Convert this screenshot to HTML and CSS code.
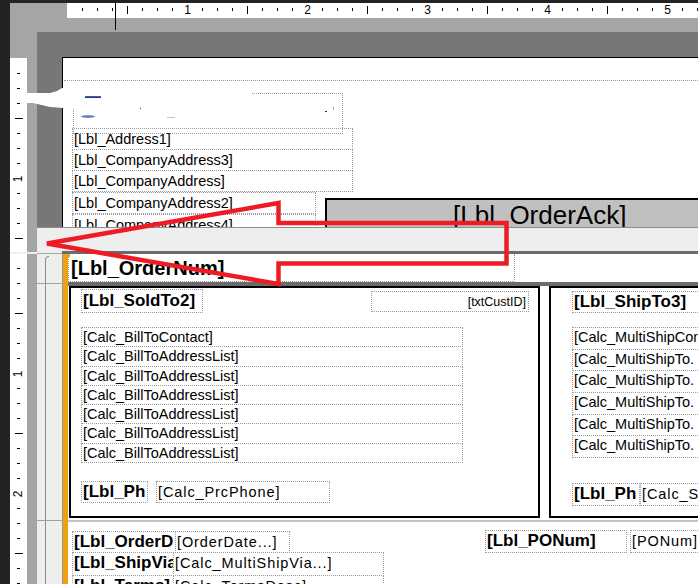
FILE: index.html
```html
<!DOCTYPE html>
<html>
<head>
<meta charset="utf-8">
<link rel="stylesheet" href="styles.css">
</head>
<body>
<div class="app">
  <div class="designer">
    <div class="hruler-row">
      <div class="hr-corner"></div>
      <div class="hruler">
        <div class="hc s"></div><div class="hc s"></div><div class="hc s"></div><div class="hc l"></div><div class="hc s"></div><div class="hc s"></div><div class="hc s"></div><div class="hc n">1</div>
        <div class="hc s"></div><div class="hc s"></div><div class="hc s"></div><div class="hc l"></div><div class="hc s"></div><div class="hc s"></div><div class="hc s"></div><div class="hc n">2</div>
        <div class="hc s"></div><div class="hc s"></div><div class="hc s"></div><div class="hc l"></div><div class="hc s"></div><div class="hc s"></div><div class="hc s"></div><div class="hc n">3</div>
        <div class="hc s"></div><div class="hc s"></div><div class="hc s"></div><div class="hc l"></div><div class="hc s"></div><div class="hc s"></div><div class="hc s"></div><div class="hc n">4</div>
        <div class="hc s"></div><div class="hc s"></div><div class="hc s"></div><div class="hc l"></div><div class="hc s"></div><div class="hc s"></div><div class="hc s"></div><div class="hc n">5</div>
        <div class="hc s"></div><div class="hc s"></div>
      </div>
    </div>
    <div class="gap-band"></div>
    <div class="main">
      <div class="side">
        <div class="side-top"></div>
        <div class="side-seg one">
          <div class="vruler">
            <div class="vc s"></div><div class="vc s"></div><div class="vc s"></div><div class="vc l"></div><div class="vc s"></div><div class="vc s"></div><div class="vc s"></div><div class="vc n"><span>1</span></div>
            <div class="vc s"></div><div class="vc s"></div><div class="vc s"></div><div class="vc l"></div><div class="vc s"></div>
          </div>
        </div>
        <div class="side-sep"></div>
        <div class="side-seg two">
          <div class="vruler">
            <div class="vc s"></div><div class="vc s"></div><div class="vc s"></div><div class="vc l"></div><div class="vc s"></div><div class="vc s"></div><div class="vc s"></div><div class="vc n"><span>1</span></div>
            <div class="vc s"></div><div class="vc s"></div><div class="vc s"></div><div class="vc l"></div><div class="vc s"></div><div class="vc s"></div><div class="vc s"></div><div class="vc n"><span>2</span></div>
            <div class="vc s"></div><div class="vc s"></div><div class="vc s"></div><div class="vc l"></div><div class="vc s"></div><div class="vc s"></div>
          </div>
        </div>
      </div>
      <div class="work">
        <div class="work-top"></div>
        <div class="hdr-row">
          <div class="gutter-dark"></div>
          <div class="page-hdr">
            <div class="dotline"></div>
            <div class="logo-box"></div>
            <div class="logo-cover"></div>
            <div class="bit blue-dash"></div>
            <div class="bit blue-oval"></div>
            <div class="bit gray-dash"></div>
            <div class="bit dot1"></div>
            <div class="bit dot2"></div>
            <div class="bit dot3"></div>
            <div class="fld h-a1">[Lbl_Address1]</div>
            <div class="fld h-ca3">[Lbl_CompanyAddress3]</div>
            <div class="fld h-ca">[Lbl_CompanyAddress]</div>
            <div class="fld h-ca2">[Lbl_CompanyAddress2]</div>
            <div class="fld h-ca4">[Lbl_CompanyAddress4]</div>
            <div class="order-ack">[Lbl_OrderAck]</div>
          </div>
        </div>
        <div class="band">
          <div class="band-gutter"></div>
          <div class="band-page"></div>
        </div>
        <div class="detail-row">
          <div class="gutter-tree">
            <div class="tree-curve"></div>
            <div class="tree-v"></div>
            <div class="tree-h t1"></div>
            <div class="tree-h t2"></div>
          </div>
          <div class="page-detail">
            <div class="orange"></div>
            <div class="orange-hook"></div>
            <div class="ordernum">[Lbl_OrderNum]</div>
            <div class="dark-line"></div>
            <div class="box soldto">
              <div class="fld b sold-lbl">[Lbl_SoldTo2]</div>
              <div class="fld custid">[txtCustID]</div>
              <div class="rows bill">
                <div class="row">[Calc_BillToContact]</div>
                <div class="row">[Calc_BillToAddressList]</div>
                <div class="row">[Calc_BillToAddressList]</div>
                <div class="row">[Calc_BillToAddressList]</div>
                <div class="row">[Calc_BillToAddressList]</div>
                <div class="row">[Calc_BillToAddressList]</div>
                <div class="row">[Calc_BillToAddressList]</div>
              </div>
              <div class="fld b s-ph">[Lbl_Ph</div>
              <div class="fld wide s-phv">[Calc_PrcPhone]</div>
            </div>
            <div class="box shipto">
              <div class="fld b ship-lbl">[Lbl_ShipTo3]</div>
              <div class="rows ship">
                <div class="row">[Calc_MultiShipContact]</div>
                <div class="row">[Calc_MultiShipTo.</div>
                <div class="row">[Calc_MultiShipTo.</div>
                <div class="row">[Calc_MultiShipTo.</div>
                <div class="row">[Calc_MultiShipTo.</div>
                <div class="row">[Calc_MultiShipTo.</div>
              </div>
              <div class="fld b p-ph">[Lbl_Ph</div>
              <div class="fld wide p-phv">[Calc_ShipPhone]</div>
            </div>
            <div class="sep-line"></div>
            <div class="fld b d-od">[Lbl_OrderD</div>
            <div class="fld wide d-odv">[OrderDate...]</div>
            <div class="fld b d-sv">[Lbl_ShipVia]</div>
            <div class="fld wide d-svv">[Calc_MultiShipVia...]</div>
            <div class="fld b d-po">[Lbl_PONum]</div>
            <div class="fld wide d-pov">[PONum]</div>
            <div class="fld b d-tm">[Lbl_Terms]</div>
            <div class="fld wide d-tmv">[Calc_TermsDesc]</div>
          </div>
        </div>
      </div>
    </div>
  </div>
  <div class="marker"></div>
  <svg class="tear" width="36" height="24" viewBox="0 0 36 24"><polygon points="0,7 23,7 30,5 35,2 36,2 36,22 23,21 6,17 0,17" fill="#fff"/></svg>
  <svg class="arrow" width="698" height="584" viewBox="0 0 698 584"><polygon points="47,243.5 278.5,203 278.5,223 506.5,223 506.5,263.5 278.5,263.5 278.5,284" fill="none" stroke="#ed1c24" stroke-width="4.5"/></svg>
</div>
</body>
</html>
```

FILE: styles.css
```css
* { box-sizing: border-box; margin: 0; padding: 0; }
html, body { margin: 0; background: #232323; }
body { width: 698px; height: 584px; overflow: hidden; }

.app {
  position: relative;
  width: 698px;
  height: 584px;
  background: #232323;
  padding: 3px 0 0 10px;
  font-family: "Liberation Sans", Arial, sans-serif;
  color: #000;
  overflow: hidden;
}
.designer {
  width: 688px;
  height: 581px;
  background: #a5a5a5;
  display: flex;
  flex-direction: column;
}

/* horizontal ruler */
.hruler-row { height: 15px; display: flex; flex: none; }
.hr-corner { width: 57px; flex: none; }
.hruler {
  flex: 1;
  background: #fff;
  display: flex;
  padding-left: 8px;
  overflow: hidden;
}
.hc { width: 15px; flex: none; display: flex; justify-content: center; align-items: flex-start; }
.hc.s::before { content: ""; width: 1px; height: 3px; margin-top: 5px; background: #000; }
.hc.l::before { content: ""; width: 1px; height: 8px; margin-top: 3px; background: #000; }
.hc.n { font-size: 12px; line-height: 14px; }
.gap-band { height: 14px; flex: none; }

.main { flex: 1; display: flex; min-height: 0; }

/* vertical ruler */
.side { width: 27px; flex: none; display: flex; flex-direction: column; }
.side-top { height: 26px; flex: none; }
.side-seg { display: flex; }
.side-seg.one { height: 194px; flex: none; }
.side-seg.two { flex: 1; min-height: 0; }
.vruler { width: 17px; background: #fff; display: flex; flex-direction: column; overflow: hidden; }
.one .vruler { padding-top: 8px; }
.two .vruler { padding-top: 7px; }
.vc { height: 15px; flex: none; display: flex; align-items: flex-start; justify-content: center; }
.vc.s::before { content: ""; width: 3px; height: 1px; margin-top: 7px; background: #000; }
.vc.l::before { content: ""; width: 8px; height: 1px; margin-top: 7px; background: #000; }
.vc.n { align-items: center; }
.vc.n span { display: block; transform: rotate(-90deg); font-size: 12px; line-height: 12px; }
.side-sep { height: 2px; background: #efefef; flex: none; }

/* work area */
.work { flex: 1; display: flex; flex-direction: column; min-width: 0; }
.work-top { height: 25px; background: #777; flex: none; }
.hdr-row { height: 170px; display: flex; flex: none; }
.gutter-dark { width: 25px; background: #777; flex: none; }
.page-hdr {
  flex: 1;
  background: #fff;
  border-left: 1px solid #000;
  border-top: 1px solid #000;
  position: relative;
  overflow: hidden;
}
.band { height: 27px; flex: none; display: flex; border-top: 1px solid #8e8e8e; }
.band-gutter { width: 25px; background: #eee; border-bottom: 1px solid #a8a8a8; flex: none; }
.band-page { flex: 1; background: #eee; border-bottom: 3px solid #6b6b6b; }
.detail-row { flex: 1; display: flex; min-height: 0; }
.gutter-tree { width: 25px; background: #eee; position: relative; flex: none; }
.page-detail {
  flex: 1;
  background: #fff;
  border-left: 1px solid #9a9a9a;
  position: relative;
  overflow: hidden;
}

/* gutter tree lines */
.tree-curve { position: absolute; left: 8px; top: 2px; width: 4px; height: 6px; border-left: 1px solid #8c8c8c; border-top: 1px solid #8c8c8c; border-top-left-radius: 4px; }
.tree-v { position: absolute; left: 8px; top: 7px; bottom: 0; width: 1px; background: #8c8c8c; }
.tree-h { position: absolute; left: 0; right: 0; height: 1px; background: #a0a0a0; }
.tree-h.t1 { top: 29px; }
.tree-h.t2 { top: 266px; }

/* page header content */
.dotline { position: absolute; left: 1px; right: 0; top: 22px; border-top: 1px dotted #9c9c9c; }
.logo-box { position: absolute; left: 10px; top: 35px; width: 270px; height: 41px; border: 1px dotted #9c9c9c; }
.logo-cover { position: absolute; left: 9px; top: 34px; width: 179px; height: 16px; background: #fff; }
.bit { position: absolute; }
.blue-dash { left: 22px; top: 38px; width: 16px; height: 2px; background: linear-gradient(#4a6ab0, #1c2f6e); }
.blue-oval { left: 18px; top: 57px; width: 14px; height: 3px; border-radius: 50%; background: #6d86b8; }
.gray-dash { left: 104px; top: 59px; width: 8px; height: 1px; background: #c8c8c8; }
.dot1 { left: 77px; top: 50px; width: 1px; height: 1px; background: #333; }
.dot2 { left: 262px; top: 53px; width: 2px; height: 1px; background: #333; }
.dot3 { left: 270px; top: 49px; width: 1px; height: 3px; background: #aaa; }

.fld {
  position: absolute;
  border: 1px dotted #9c9c9c;
  white-space: nowrap;
  overflow: hidden;
  font-size: 14.5px;
  line-height: 20px;
  padding-left: 1px;
}
.fld.b { font-weight: bold; font-size: 17px; }
.fld.wide { letter-spacing: 0.9px; }

.h-a1 { left: 9px; top: 70px; width: 281px; height: 22px; }
.h-ca3 { left: 9px; top: 91px; width: 281px; height: 22px; }
.h-ca { left: 9px; top: 112px; width: 281px; height: 22px; }
.h-ca2 { left: 9px; top: 134px; width: 244px; height: 22px; }
.h-ca4 { left: 9px; top: 156px; width: 244px; height: 22px; }

.order-ack {
  position: absolute;
  left: 262px;
  top: 140px;
  width: 460px;
  height: 60px;
  border-top: 2px solid #000;
  border-left: 2px solid #000;
  background: #c0c0c0;
  font-size: 26px;
  line-height: 28px;
  padding: 1px 0 0 126px;
  white-space: nowrap;
}

/* detail content */
.orange { position: absolute; left: 0; top: -1px; width: 5px; bottom: 0; background: #eea20f; }
.orange-hook { position: absolute; left: 0; top: -1px; width: 7px; height: 4px; background: #eea20f; }
.ordernum {
  position: absolute;
  left: 5px;
  top: 0;
  width: 447px;
  height: 28px;
  border: 1px dotted #9c9c9c;
  border-top: none;
  font-weight: bold;
  font-size: 20px;
  line-height: 23px;
  padding: 3px 0 0 2px;
  white-space: nowrap;
}
.dark-line { position: absolute; left: 5px; right: 0; top: 28px; height: 4px; background: #6b6b6b; }

.box { position: absolute; top: 32px; height: 232px; border: 2px solid #000; }
.soldto { left: 6px; width: 471px; }
.shipto { left: 486px; width: 300px; }

.sold-lbl { left: 10px; top: 1px; width: 122px; height: 24px; padding-top: 1px; }
.custid { left: 300px; top: 3px; width: 158px; height: 21px; font-size: 12.5px; text-align: right; padding-right: 2px; }
.s-ph { left: 10px; top: 193px; width: 67px; height: 22px; }
.s-phv { left: 85px; top: 193px; width: 174px; height: 22px; }

.ship-lbl { left: 21px; top: 3px; width: 160px; height: 22px; }
.p-ph { left: 21px; top: 195px; width: 68px; height: 23px; }
.p-phv { left: 89px; top: 195px; width: 200px; height: 23px; }

.rows { position: absolute; display: flex; flex-direction: column; }
.row {
  border: 1px dotted #9c9c9c;
  white-space: nowrap;
  overflow: hidden;
  font-size: 14.5px;
  line-height: 19px;
  padding-left: 1px;
  flex: none;
}
.row + .row { margin-top: -1px; }
.bill { left: 10px; top: 39px; width: 382px; }
.bill .row { height: 20.3px; }
.ship { left: 21px; top: 39px; width: 200px; }
.ship .row { height: 22.7px; }

.sep-line { position: absolute; left: 5px; right: 0; top: 266px; height: 2px; background: #c4c4c4; }

.d-od { left: 9px; top: 277px; width: 104px; height: 22px; }
.d-odv { left: 112px; top: 277px; width: 115px; height: 22px; }
.d-sv { left: 9px; top: 298px; width: 102px; height: 24px; }
.d-svv { left: 110px; top: 298px; width: 211px; height: 24px; }
.d-po { left: 422px; top: 276px; width: 142px; height: 23px; }
.d-pov { left: 567px; top: 276px; width: 100px; height: 23px; }
.d-tm { left: 9px; top: 321px; width: 102px; height: 24px; }
.d-tmv { left: 110px; top: 321px; width: 211px; height: 24px; }

/* overlays */
.marker { position: absolute; left: 115px; top: 3px; width: 1px; height: 27px; background: #000; }
.tear { position: absolute; left: 27px; top: 86px; }
.arrow { position: absolute; left: 0; top: 0; pointer-events: none; }
```
